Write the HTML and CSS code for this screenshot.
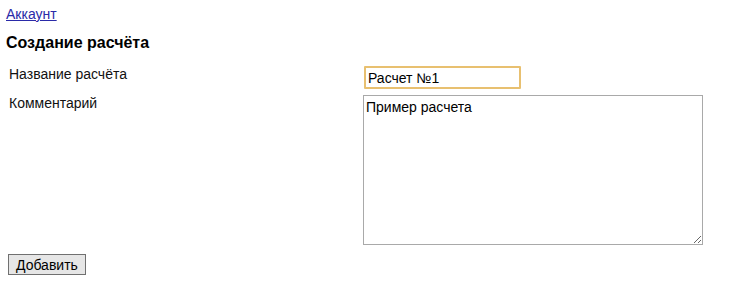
FILE: index.html
```html
<!DOCTYPE html>
<html lang="ru">
<head>
<meta charset="utf-8">
<title>Создание расчёта</title>
<link rel="stylesheet" href="styles.css">
</head>
<body>
<a class="account" href="#">Аккаунт</a>
<h1 class="title">Создание расчёта</h1>
<form class="form">
  <div class="row">
    <label class="label" for="name">Название расчёта</label>
    <div class="field"><input class="input" id="name" type="text" value="Расчет №1"></div>
  </div>
  <div class="row">
    <label class="label" for="comment">Комментарий</label>
    <div class="field"><textarea class="textarea" id="comment">Пример расчета</textarea></div>
  </div>
  <button class="submit" type="button">Добавить</button>
</form>
</body>
</html>
```
FILE: styles.css
```css
html, body {
  margin: 0;
  padding: 0;
  background: #fff;
}
body {
  padding: 6px 6px 0 6px;
  font-family: "Liberation Sans", Arial, sans-serif;
  font-size: 13px;
  color: #000;
}
.account {
  display: block;
  color: #2a2aa8;
  text-decoration: underline;
  font-size: 14px;
  line-height: 16px;
}
.title {
  margin: 11px 0 0 0;
  font-size: 16px;
  line-height: 20px;
  font-weight: bold;
}
.form {
  margin: 12px 0 0 0;
}
.row {
  display: grid;
  grid-template-columns: 357px auto;
  align-items: start;
}
.label {
  padding: 1px 0 0 3px;
  font-size: 14px;
  line-height: 16px;
  color: #111;
}
.field {
  padding: 1px 0 2px 0;
}
.input {
  box-sizing: border-box;
  width: 157px;
  height: 23px;
  margin: 0 0 3px 1px;
  padding: 1px 2px;
  border: 2px solid #e8c070;
  border-radius: 1px;
  font-family: "Liberation Sans", Arial, sans-serif;
  font-size: 14px;
  color: #000;
  outline: none;
  background: #fff;
}
.textarea {
  box-sizing: border-box;
  display: block;
  width: 340px;
  height: 150px;
  margin: 0;
  padding: 3px 2px;
  border: 1px solid #a9a9a9;
  font-family: "Liberation Sans", Arial, sans-serif;
  font-size: 14px;
  line-height: 16px;
  color: #000;
  resize: both;
}
.submit {
  margin: 7px 0 0 2px;
  height: 21px;
  padding: 0 7px;
  border: 1px solid #707070;
  border-radius: 0;
  background: #e6e6e6;
  font-family: "Liberation Sans", Arial, sans-serif;
  font-size: 14px;
  color: #000;
}
```
